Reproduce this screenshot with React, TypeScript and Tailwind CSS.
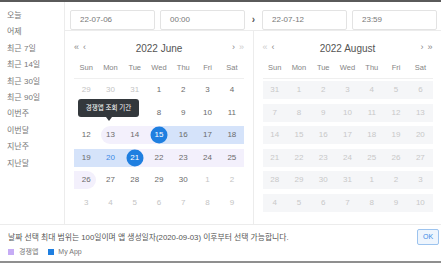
import React from 'react';

type Cell = { d: number; out?: boolean };

const june: Cell[][] = [
  [{ d: 29, out: true }, { d: 30, out: true }, { d: 31, out: true }, { d: 1 }, { d: 2 }, { d: 3 }, { d: 4 }],
  [{ d: 5 }, { d: 6 }, { d: 7 }, { d: 8 }, { d: 9 }, { d: 10 }, { d: 11 }],
  [{ d: 12 }, { d: 13 }, { d: 14 }, { d: 15 }, { d: 16 }, { d: 17 }, { d: 18 }],
  [{ d: 19 }, { d: 20 }, { d: 21 }, { d: 22 }, { d: 23 }, { d: 24 }, { d: 25 }],
  [{ d: 26 }, { d: 27 }, { d: 28 }, { d: 29 }, { d: 30 }, { d: 1, out: true }, { d: 2, out: true }],
  [3, 4, 5, 6, 7, 8, 9].map((d) => ({ d, out: true })),
];

const august: number[][] = [
  [31, 1, 2, 3, 4, 5, 6],
  [7, 8, 9, 10, 11, 12, 13],
  [14, 15, 16, 17, 18, 19, 20],
  [21, 22, 23, 24, 25, 26, 27],
  [28, 29, 30, 31, 1, 2, 3],
  [4, 5, 6, 7, 8, 9, 10],
];

const weekDays = ['Sun', 'Mon', 'Tue', 'Wed', 'Thu', 'Fri', 'Sat'];

const presets = ['오늘', '어제', '최근 7일', '최근 14일', '최근 30일', '최근 90일', '이번주', '이번달', '지난주', '지난달'];

function Input({ value }: { value: string }) {
  return (
    <div className="w-[85px] h-[20px] border border-[#e3e3e3] rounded-[2px] flex items-center pl-[9px] text-[8px] text-[#777]">
      {value}
    </div>
  );
}

function CalendarHeader({ title, leftDim, rightDim }: { title: string; leftDim?: boolean; rightDim?: boolean }) {
  return (
    <div className="w-[170px] h-[20px] grid grid-cols-[30px_1fr_30px] items-center">
      <div className="flex items-center gap-[4px] text-[9px] text-[#888]">
        <span className={leftDim ? 'text-[#ccc]' : ''}>«</span>
        <span>‹</span>
      </div>
      <div className="text-center text-[10px] text-[#555]">{title}</div>
      <div className="flex items-center justify-end gap-[4px] text-[9px] text-[#888]">
        <span>›</span>
        <span className={rightDim ? 'text-[#ccc]' : ''}>»</span>
      </div>
    </div>
  );
}

function WeekNames() {
  return (
    <div className="w-[170px] h-[21px] grid grid-cols-7 items-center border-b border-[#efefef]">
      {weekDays.map((w) => (
        <div key={w} className="text-center text-[7.5px] text-[#858585]">
          {w}
        </div>
      ))}
    </div>
  );
}

function JuneCell({ cell, row }: { cell: Cell; row: number }) {
  const key = cell.out ? -1 : cell.d;
  const inLav = !cell.out && key >= 13 && key <= 26;
  const lavStart = key === 13;
  const lavEnd = key === 26;
  const blueFull = !cell.out && key >= 16 && key <= 20;
  const selected = key === 15 || key === 21;
  const hidden = row === 1 && key >= 5 && key <= 7;

  return (
    <div className="relative h-[18px] flex items-center justify-center">
      {inLav && (
        <div
          className={`absolute inset-0 bg-[#f3f0fc] ${lavStart ? 'rounded-l-full ml-[3px]' : ''} ${lavEnd ? 'rounded-r-full mr-[2px]' : ''}`}
        />
      )}
      {blueFull && <div className="absolute inset-0 bg-[#d5e3fa]" />}
      {key === 15 && <div className="absolute top-0 bottom-0 left-1/2 right-0 bg-[#d5e3fa]" />}
      {key === 21 && <div className="absolute top-0 bottom-0 left-0 right-1/2 bg-[#d5e3fa]" />}
      {selected && <div className="absolute w-[17px] h-[17px] rounded-full bg-[#1f7fe0] left-1/2 top-1/2 -translate-x-1/2 -translate-y-1/2" />}
      {!hidden && (
        <span
          className={`relative text-[8px] ${
            selected ? 'text-white' : cell.out ? 'text-[#c4c4c4]' : key === 20 ? 'text-[#3b8ae6]' : 'text-[#6b6b6b]'
          }`}
        >
          {cell.d}
        </span>
      )}
    </div>
  );
}

function JuneCalendar() {
  return (
    <div className="flex-1 border-r border-[#ececec] pl-[9px] pt-[7px]">
      <CalendarHeader title="2022 June" rightDim />
      <WeekNames />
      <div className="relative w-[170px] mt-[2px] flex flex-col gap-[4.5px]">
        {june.map((week, r) => (
          <div key={r} className="grid grid-cols-7">
            {week.map((c, i) => (
              <JuneCell key={i} cell={c} row={r} />
            ))}
          </div>
        ))}
        {/* tooltip */}
        <div className="absolute left-[4px] top-[18px] flex flex-col items-center">
          <div className="w-[61px] h-[18px] rounded-[3px] bg-[#33383c] text-white text-[6.5px] flex items-center justify-center">
            경쟁앱 조회 기간
          </div>
          <div className="w-0 h-0 border-l-[3.5px] border-r-[3.5px] border-t-[4px] border-l-transparent border-r-transparent border-t-[#33383c]" />
        </div>
      </div>
    </div>
  );
}

function AugustCalendar() {
  return (
    <div className="flex-1 pl-[9px] pt-[7px]">
      <CalendarHeader title="2022 August" leftDim />
      <WeekNames />
      <div className="w-[170px] mt-[2px] flex flex-col gap-[4.5px]">
        {august.map((week, r) => (
          <div key={r} className="grid grid-cols-7 h-[18px] bg-[#f5f6f8]">
            {week.map((d, i) => (
              <div key={i} className="flex items-center justify-center text-[8px] text-[#c8c8c8]">
                {d}
              </div>
            ))}
          </div>
        ))}
      </div>
    </div>
  );
}

export default function App() {
  return (
    <div className="w-[441px] h-[263px] bg-white border-t-2 border-b-2 border-t-[#5a5a5a] border-b-[#8f8f8f] flex flex-col overflow-hidden font-['Liberation_Sans','Noto_Sans_CJK_KR',sans-serif]">
      <div className="flex h-[222px]">
        {/* Presets */}
        <div className="w-[65px] border-r border-[#ececec] pt-[6px] pl-[7px] flex flex-col">
          {presets.map((p) => (
            <div key={p} className="leading-[16.4px] text-[8px] text-[#777]">
              {p}
            </div>
          ))}
        </div>

        <div className="flex-1 flex flex-col">
          {/* Inputs */}
          <div className="h-[29px] border-b border-[#ececec] flex items-center pl-[5px] pt-[8px] pb-[1px]">
            <Input value="22-07-06" />
            <div className="w-[5px]" />
            <Input value="00:00" />
            <div className="w-[17px] flex justify-center text-[10px] font-bold text-[#555]">›</div>
            <Input value="22-07-12" />
            <div className="w-[5px]" />
            <Input value="23:59" />
          </div>

          {/* Calendars */}
          <div className="flex-1 flex">
            <JuneCalendar />
            <AugustCalendar />
          </div>
        </div>
      </div>

      {/* Footer */}
      <div className="flex-1 border-t border-[#ececec] flex items-start justify-between pl-[8px] pr-[2px] pt-[8px]">
        <div className="flex flex-col gap-[4px]">
          <div className="text-[7.8px] text-[#555] leading-[10px]">
            날짜 선택 최대 범위는 100일이며 앱 생성일자(2020-09-03) 이후부터 선택 가능합니다.
          </div>
          <div className="flex items-center text-[7px] text-[#777] leading-[10px]">
            <span className="w-[6px] h-[6px] bg-[#c6acf5] mr-[5px]" />
            <span className="mr-[10px]">경쟁앱</span>
            <span className="w-[6px] h-[6px] bg-[#1f7fe0] mr-[4px]" />
            <span>My App</span>
          </div>
        </div>
        <div className="mt-[-4px] w-[22px] h-[16px] rounded-[2px] border border-[#9cc3ee] bg-[#eef5fd] text-[#3b8ae6] text-[7px] flex items-center justify-center">
          OK
        </div>
      </div>
    </div>
  );
}
